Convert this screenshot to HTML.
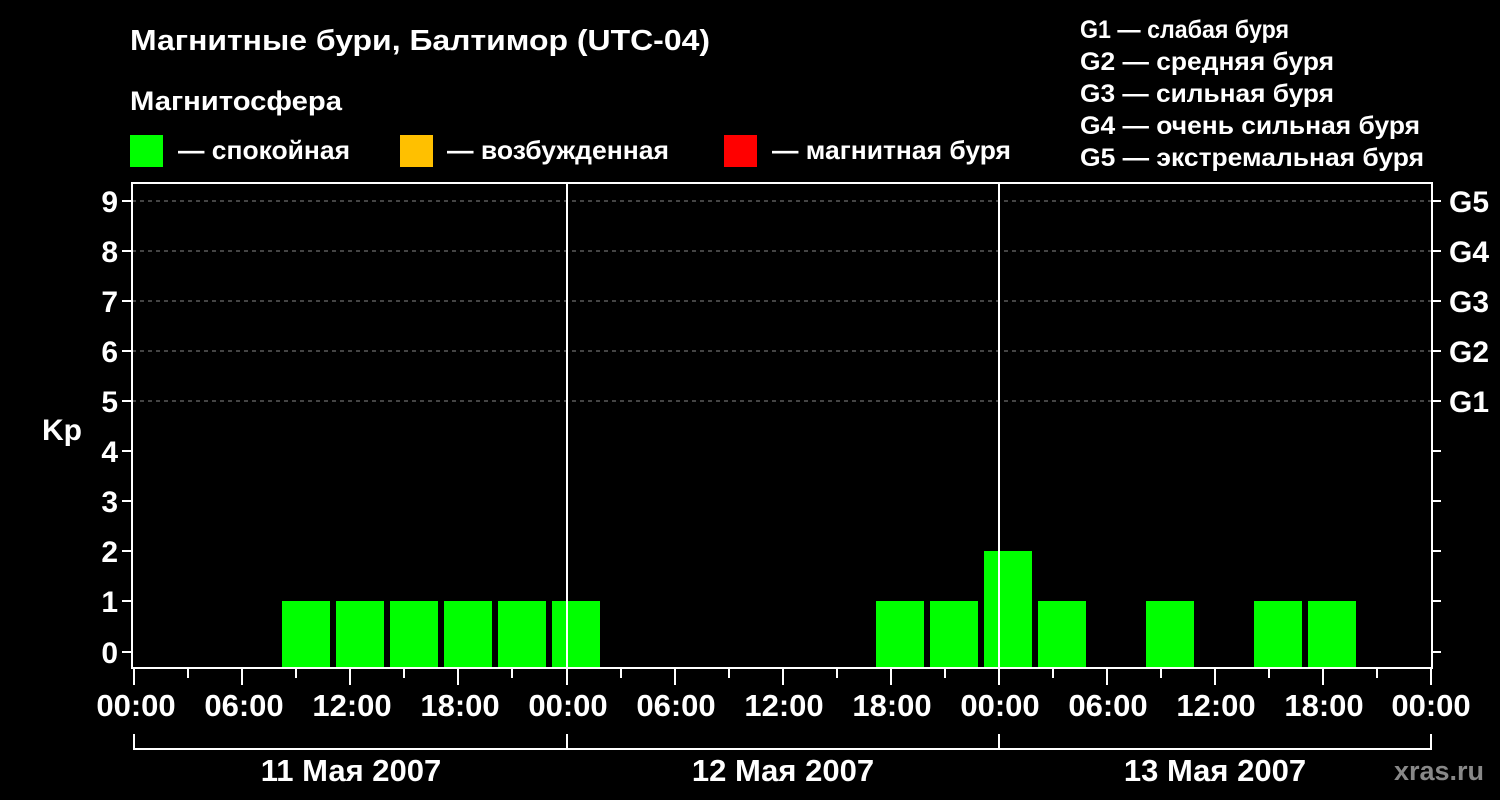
<!DOCTYPE html>
<html><head><meta charset="utf-8"><style>
html,body{margin:0;padding:0;background:#000;}
svg{display:block}
text{font-family:"Liberation Sans",sans-serif;font-weight:bold;fill:#fff}
</style></head><body>
<svg width="1500" height="800" viewBox="0 0 1500 800" xmlns="http://www.w3.org/2000/svg">
<rect width="1500" height="800" fill="#000"/>
<text x="130" y="50" font-size="29" textLength="580" lengthAdjust="spacingAndGlyphs">Магнитные бури, Балтимор (UTC-04)</text>
<text x="130" y="110" font-size="27" textLength="212" lengthAdjust="spacingAndGlyphs">Магнитосфера</text>
<rect x="130" y="135" width="33" height="32" fill="#00ff00"/>
<text x="178" y="159" font-size="26" textLength="172" lengthAdjust="spacingAndGlyphs">— спокойная</text>
<rect x="400" y="135" width="33" height="32" fill="#ffc000"/>
<text x="447" y="159" font-size="26" textLength="222" lengthAdjust="spacingAndGlyphs">— возбужденная</text>
<rect x="724" y="135" width="33" height="32" fill="#ff0000"/>
<text x="772" y="159" font-size="26" textLength="239" lengthAdjust="spacingAndGlyphs">— магнитная буря</text>
<g font-size="25">
<text x="1080" y="38" textLength="209" lengthAdjust="spacingAndGlyphs">G1 — слабая буря</text>
<text x="1080" y="70" textLength="254" lengthAdjust="spacingAndGlyphs">G2 — средняя буря</text>
<text x="1080" y="102" textLength="254" lengthAdjust="spacingAndGlyphs">G3 — сильная буря</text>
<text x="1080" y="134" textLength="340" lengthAdjust="spacingAndGlyphs">G4 — очень сильная буря</text>
<text x="1080" y="166" textLength="344" lengthAdjust="spacingAndGlyphs">G5 — экстремальная буря</text>
</g>
<g stroke="#888" stroke-width="1" stroke-dasharray="4,4">
<line x1="132" y1="201" x2="1432" y2="201"/><line x1="132" y1="251" x2="1432" y2="251"/>
<line x1="132" y1="301" x2="1432" y2="301"/><line x1="132" y1="351" x2="1432" y2="351"/>
<line x1="132" y1="401" x2="1432" y2="401"/>
</g>
<g fill="#00ff00">
<rect x="282" y="601" width="48" height="67"/><rect x="336" y="601" width="48" height="67"/>
<rect x="390" y="601" width="48" height="67"/><rect x="444" y="601" width="48" height="67"/>
<rect x="498" y="601" width="48" height="67"/><rect x="552" y="601" width="48" height="67"/>
<rect x="876" y="601" width="48" height="67"/><rect x="930" y="601" width="48" height="67"/>
<rect x="984" y="551" width="48" height="117"/><rect x="1038" y="601" width="48" height="67"/>
<rect x="1146" y="601" width="48" height="67"/><rect x="1254" y="601" width="48" height="67"/>
<rect x="1308" y="601" width="48" height="67"/>
</g>
<g stroke="#fff" stroke-width="2" fill="none">
<path d="M132 183 H1432 V668 H132 Z"/>
<line x1="567" y1="183" x2="567" y2="668"/><line x1="999" y1="183" x2="999" y2="668"/>
<path d="M122 201h10M122 251h10M122 301h10M122 351h10M122 401h10M122 451h10M122 501h10M122 551h10M122 601h10M122 652h10"/>
<path d="M1432 201h9M1432 251h9M1432 301h9M1432 351h9M1432 401h9M1432 451h9M1432 501h9M1432 551h9M1432 601h9M1432 652h9"/>
<path d="M134 669v16M188 669v9M242 669v16M296 669v9M350 669v16M404 669v9M458 669v16M512 669v9M567 669v16M621 669v9M675 669v16M729 669v9M783 669v16M837 669v9M891 669v16M945 669v9M999 669v16M1053 669v9M1107 669v16M1161 669v9M1215 669v16M1269 669v9M1323 669v16M1377 669v9M1431 669v16"/>
<path d="M134 734v15H1431v-15M567 734v15M999 734v15"/>
</g>
<g font-size="30" text-anchor="end">
<text x="118" y="212">9</text><text x="118" y="262">8</text><text x="118" y="312">7</text>
<text x="118" y="362">6</text><text x="118" y="412">5</text><text x="118" y="462">4</text>
<text x="118" y="512">3</text><text x="118" y="562">2</text><text x="118" y="612">1</text>
<text x="118" y="663">0</text>
</g>
<text x="42" y="440" font-size="30">Kp</text>
<g font-size="30">
<text x="1449" y="212">G5</text><text x="1449" y="262">G4</text><text x="1449" y="312">G3</text>
<text x="1449" y="362">G2</text><text x="1449" y="412">G1</text>
</g>
<g font-size="31" text-anchor="middle">
<text x="136" y="716">00:00</text><text x="244" y="716">06:00</text><text x="352" y="716">12:00</text>
<text x="460" y="716">18:00</text><text x="568" y="716">00:00</text><text x="676" y="716">06:00</text>
<text x="784" y="716">12:00</text><text x="892" y="716">18:00</text><text x="1000" y="716">00:00</text>
<text x="1108" y="716">06:00</text><text x="1216" y="716">12:00</text><text x="1324" y="716">18:00</text>
<text x="1431" y="716">00:00</text>
<text x="351" y="781">11 Мая 2007</text>
<text x="783" y="781">12 Мая 2007</text>
<text x="1215" y="781">13 Мая 2007</text>
</g>
<text x="1484" y="780" font-size="27" text-anchor="end" style="fill:#888">xras.ru</text>
</svg>
</body></html>
